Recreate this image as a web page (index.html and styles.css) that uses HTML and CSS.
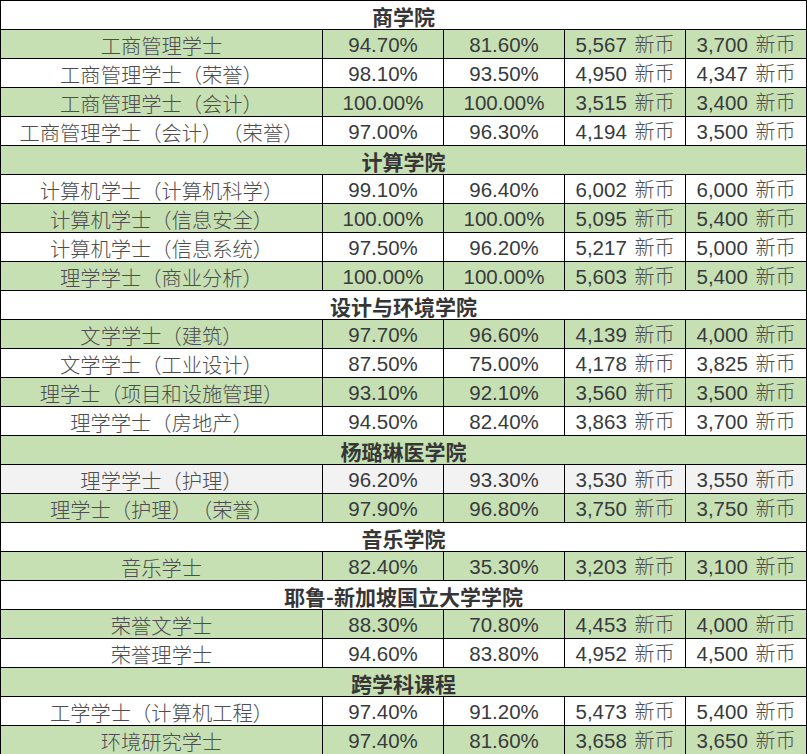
FILE: index.html
```html
<!DOCTYPE html>
<html lang="zh">
<head>
<meta charset="utf-8">
<link rel="stylesheet" href="styles.css">
</head>
<body>
<table class="grid">
<colgroup><col class="c-name"><col class="c-val"><col class="c-val"><col class="c-val"><col class="c-val"></colgroup>
<tr class="sec w"><td colspan="5">商学院</td></tr>
<tr class="g"><td class="name">工商管理学士</td><td>94.70%</td><td>81.60%</td><td>5,567 <span class="cn">新币</span></td><td>3,700 <span class="cn">新币</span></td></tr>
<tr class="w"><td class="name">工商管理学士（荣誉）</td><td>98.10%</td><td>93.50%</td><td>4,950 <span class="cn">新币</span></td><td>4,347 <span class="cn">新币</span></td></tr>
<tr class="g"><td class="name">工商管理学士（会计）</td><td>100.00%</td><td>100.00%</td><td>3,515 <span class="cn">新币</span></td><td>3,400 <span class="cn">新币</span></td></tr>
<tr class="w"><td class="name">工商管理学士（会计）（荣誉）</td><td>97.00%</td><td>96.30%</td><td>4,194 <span class="cn">新币</span></td><td>3,500 <span class="cn">新币</span></td></tr>
<tr class="sec g"><td colspan="5">计算学院</td></tr>
<tr class="w"><td class="name">计算机学士（计算机科学）</td><td>99.10%</td><td>96.40%</td><td>6,002 <span class="cn">新币</span></td><td>6,000 <span class="cn">新币</span></td></tr>
<tr class="g"><td class="name">计算机学士（信息安全）</td><td>100.00%</td><td>100.00%</td><td>5,095 <span class="cn">新币</span></td><td>5,400 <span class="cn">新币</span></td></tr>
<tr class="w"><td class="name">计算机学士（信息系统）</td><td>97.50%</td><td>96.20%</td><td>5,217 <span class="cn">新币</span></td><td>5,000 <span class="cn">新币</span></td></tr>
<tr class="g"><td class="name">理学学士（商业分析）</td><td>100.00%</td><td>100.00%</td><td>5,603 <span class="cn">新币</span></td><td>5,400 <span class="cn">新币</span></td></tr>
<tr class="sec w"><td colspan="5">设计与环境学院</td></tr>
<tr class="g"><td class="name">文学学士（建筑）</td><td>97.70%</td><td>96.60%</td><td>4,139 <span class="cn">新币</span></td><td>4,000 <span class="cn">新币</span></td></tr>
<tr class="w"><td class="name">文学学士（工业设计）</td><td>87.50%</td><td>75.00%</td><td>4,178 <span class="cn">新币</span></td><td>3,825 <span class="cn">新币</span></td></tr>
<tr class="g"><td class="name">理学士（项目和设施管理）</td><td>93.10%</td><td>92.10%</td><td>3,560 <span class="cn">新币</span></td><td>3,500 <span class="cn">新币</span></td></tr>
<tr class="w"><td class="name">理学学士（房地产）</td><td>94.50%</td><td>82.40%</td><td>3,863 <span class="cn">新币</span></td><td>3,700 <span class="cn">新币</span></td></tr>
<tr class="sec g"><td colspan="5">杨璐琳医学院</td></tr>
<tr class="l"><td class="name">理学学士（护理）</td><td>96.20%</td><td>93.30%</td><td>3,530 <span class="cn">新币</span></td><td>3,550 <span class="cn">新币</span></td></tr>
<tr class="g"><td class="name">理学士（护理）（荣誉）</td><td>97.90%</td><td>96.80%</td><td>3,750 <span class="cn">新币</span></td><td>3,750 <span class="cn">新币</span></td></tr>
<tr class="sec w"><td colspan="5">音乐学院</td></tr>
<tr class="g"><td class="name">音乐学士</td><td>82.40%</td><td>35.30%</td><td>3,203 <span class="cn">新币</span></td><td>3,100 <span class="cn">新币</span></td></tr>
<tr class="sec w"><td colspan="5">耶鲁-新加坡国立大学学院</td></tr>
<tr class="g"><td class="name">荣誉文学士</td><td>88.30%</td><td>70.80%</td><td>4,453 <span class="cn">新币</span></td><td>4,000 <span class="cn">新币</span></td></tr>
<tr class="w"><td class="name">荣誉理学士</td><td>94.60%</td><td>83.80%</td><td>4,952 <span class="cn">新币</span></td><td>4,500 <span class="cn">新币</span></td></tr>
<tr class="sec g"><td colspan="5">跨学科课程</td></tr>
<tr class="w"><td class="name">工学学士（计算机工程）</td><td>97.40%</td><td>91.20%</td><td>5,473 <span class="cn">新币</span></td><td>5,400 <span class="cn">新币</span></td></tr>
<tr class="g"><td class="name">环境研究学士</td><td>97.40%</td><td>81.60%</td><td>3,658 <span class="cn">新币</span></td><td>3,650 <span class="cn">新币</span></td></tr>
</table>
</body>
</html>
```
FILE: styles.css
```css
html, body {
  margin: 0;
  padding: 0;
  background: #ffffff;
}
.grid {
  border-collapse: collapse;
  width: 807px;
  table-layout: fixed;
  font-family: "Liberation Sans", "Noto Sans CJK SC", sans-serif;
  font-size: 20.5px;
  color: #383b3d;
  text-spacing-trim: space-all;
}
.c-name { width: 322px; }
.c-val { width: 121px; }
.grid tr { height: 29px; }
.grid td {
  border: 1px solid #000;
  height: 26px;
  padding: 2px 0 0 0;
  text-align: center;
  vertical-align: middle;
  line-height: 22px;
  white-space: nowrap;
}
.grid .name,
.grid .cn {
  font-family: "Noto Sans CJK SC", sans-serif;
  font-size: 20px;
  color: #4d4d4d;
  font-weight: 300;
  line-height: 20px;
  text-spacing-trim: space-all;
}
.grid .name { font-size: 20.3px; }
.grid .cn { margin-left: 2px; }
.grid .sec td {
  font-family: "Noto Sans CJK SC", sans-serif;
  font-size: 21px;
  font-weight: 700;
  color: #363636;
  height: 26px;
  padding-top: 2px;
}
.g td { background: #c6e0b4; }
.w td { background: #ffffff; }
.l td { background: #f2f2f2; }
```
